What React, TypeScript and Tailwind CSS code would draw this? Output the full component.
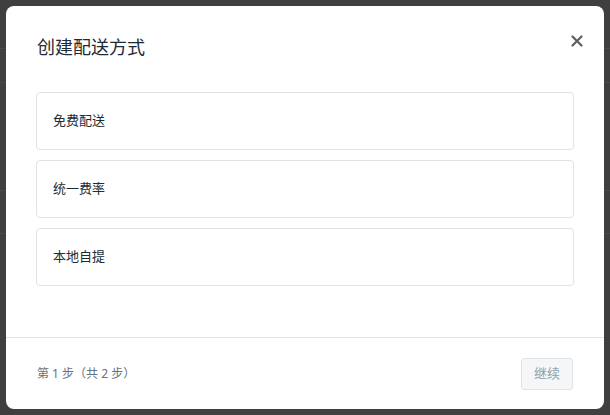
const OPTIONS = ['免费配送', '统一费率', '本地自提'];

const FONT = { fontFamily: "'Noto Sans', 'Noto Sans CJK SC', sans-serif" };

export default function App() {
  return (
    <div className="relative w-[610px] h-[415px] bg-[#3f3f3f] overflow-hidden" style={FONT}>
      {/* faint page lines behind the overlay */}
      <div className="absolute left-0 top-[48px] w-full h-px bg-[#4a4a4a]" />
      <div className="absolute left-0 top-[82px] w-full h-px bg-[#4a4a4a]" />
      <div className="absolute left-0 top-[190px] w-full h-px bg-[#4a4a4a]" />
      <div className="absolute left-0 top-[233px] w-full h-px bg-[#4a4a4a]" />

      <div className="relative ml-[6px] mt-[6px] w-[598px] h-[403px] bg-white rounded-[8px] flex flex-col">
        <div className="flex-1 px-[30px] pt-[29px]">
          <div className="flex items-center justify-between">
            <h2 className="text-[18px] leading-[24px] text-[#212b36] pl-px">创建配送方式</h2>
            <button className="w-[20px] h-[20px] mr-[-13px] mt-[-12px] flex items-center justify-center text-[#5c5f62]">
              <svg width="12" height="12" viewBox="0 0 12 12" fill="none" stroke="currentColor" strokeWidth="2.2" strokeLinecap="round">
                <path d="M1.5 1.5l9 9M10.5 1.5l-9 9" />
              </svg>
            </button>
          </div>

          <div className="mt-[33px] flex flex-col gap-[10px]">
            {OPTIONS.map((opt) => (
              <div
                key={opt}
                className="h-[58px] border border-[#dfe3e8] rounded-[4px] flex items-center px-[16px] text-[13px] text-[#212b36]"
              >
                {opt}
              </div>
            ))}
          </div>
        </div>

        <div className="h-[72px] border-t border-[#dfe3e8] flex items-center justify-between pl-[31px] pr-[31px]">
          <span className="text-[12px] text-[#637381]">第 1 步（共 2 步）</span>
          <button className="w-[52px] h-[32px] rounded-[3px] border border-[#dfe3e8] bg-[#f4f6f8] text-[13px] text-[#919eab]">
            继续
          </button>
        </div>
      </div>
    </div>
  );
}
